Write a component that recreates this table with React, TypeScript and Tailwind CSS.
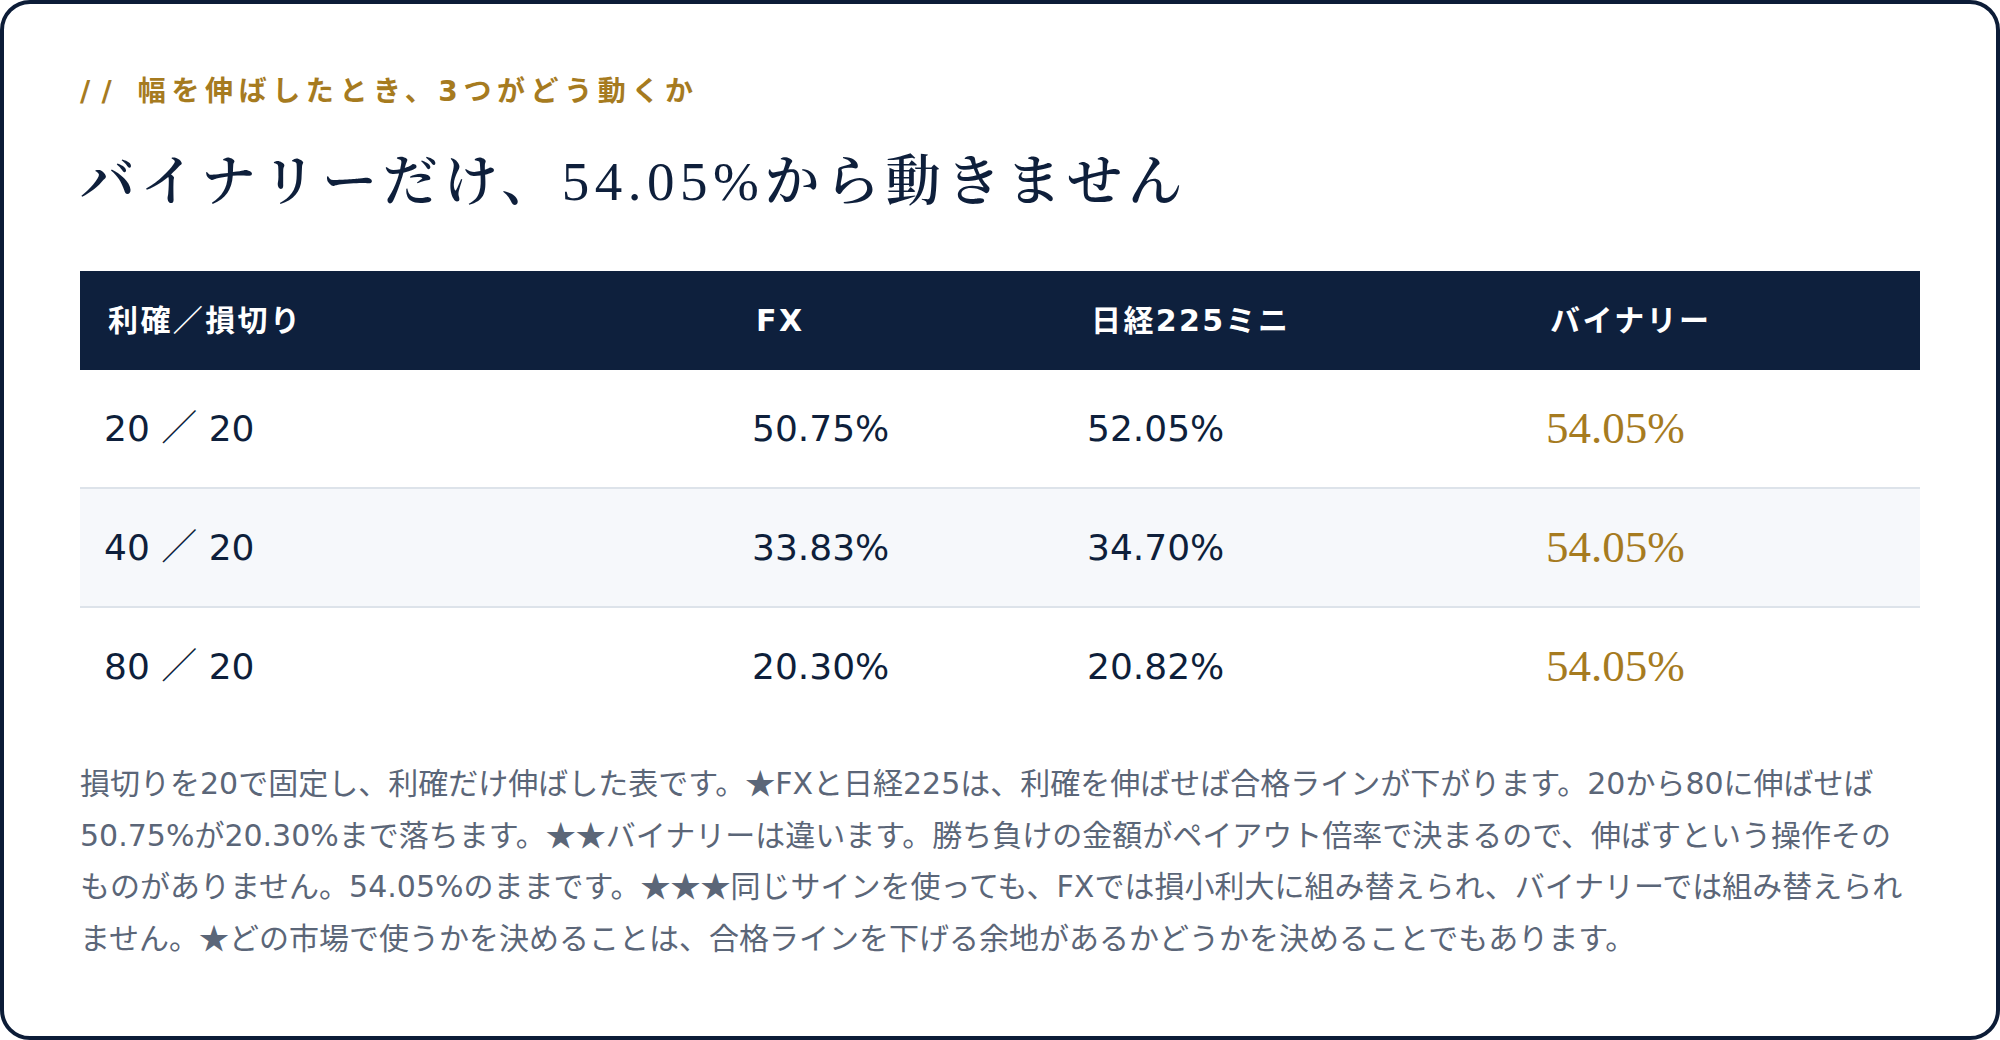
const rows = [
  { ratio: '20 ／ 20', fx: '50.75%', nikkei: '52.05%', binary: '54.05%' },
  { ratio: '40 ／ 20', fx: '33.83%', nikkei: '34.70%', binary: '54.05%' },
  { ratio: '80 ／ 20', fx: '20.30%', nikkei: '20.82%', binary: '54.05%' },
];

const note =
  '損切りを20で固定し、利確だけ伸ばした表です。★FXと日経225は、利確を伸ばせば合格ラインが下がります。20から80に伸ばせば50.75%が20.30%まで落ちます。★★バイナリーは違います。勝ち負けの金額がペイアウト倍率で決まるので、伸ばすという操作そのものがありません。54.05%のままです。★★★同じサインを使っても、FXでは損小利大に組み替えられ、バイナリーでは組み替えられません。★どの市場で使うかを決めることは、合格ラインを下げる余地があるかどうかを決めることでもあります。';

// ★ は全角の字形で出す
function Stars({ text }: { text: string }) {
  return (
    <>
      {text.split(/(★)/).map((part, i) =>
        part === '★' ? (
          <span key={i} className="font-['Noto_Sans_CJK_JP',sans-serif] leading-none">★</span>
        ) : (
          part
        )
      )}
    </>
  );
}

export default function App() {
  return (
    <div className="min-h-[1040px] bg-white font-['DejaVu_Sans','Noto_Sans_CJK_JP',sans-serif]">
      <div className="h-[1040px] rounded-[30px] border-[4px] border-[#0c1c37] px-[76px] pt-[68px]">
        {/* 見出し */}
        <p className="text-[28px] font-bold leading-[40px] tracking-[0.2em] text-[#a67b1f]">
          <span className="mr-[15px] tracking-[0.4em]">//</span>幅を伸ばしたとき、3つがどう動くか
        </p>
        <h2 className="mt-[31px] font-['Liberation_Serif','Noto_Serif_CJK_JP',serif] text-[55px] font-semibold leading-[77px] tracking-[0.1em] text-[#0e1f3b]">
          バイナリーだけ、<span className="font-normal">54.05%</span>から動きません
        </h2>

        {/* 表 */}
        <table className="mt-[51px] w-full table-fixed border-collapse">
          <thead>
            <tr className="bg-[#0e203d] text-white">
              <th className="w-[648px] px-[28px] py-[27px] text-left text-[30px] font-bold leading-[45px] tracking-[0.08em]">利確／損切り</th>
              <th className="w-[335px] px-[28px] py-[27px] text-left text-[30px] font-bold leading-[45px] tracking-[0.08em]">FX</th>
              <th className="w-[459px] px-[28px] py-[27px] text-left text-[30px] font-bold leading-[45px] tracking-[0.08em]">日経225ミニ</th>
              <th className="w-[398px] px-[28px] py-[27px] text-left text-[30px] font-bold leading-[45px] tracking-[0.08em]">バイナリー</th>
            </tr>
          </thead>
          <tbody>
            {rows.map((r, i) => (
              <tr key={r.ratio} className={i === 1 ? 'border-t-2 border-[#dde3ea] bg-[#f6f8fb]' : i === 2 ? 'border-t-2 border-[#dde3ea]' : ''}>
                <td className="px-[24px] py-[32px] text-[36px] leading-[53px] text-[#0e1f3b]">{r.ratio}</td>
                <td className="px-[24px] py-[32px] text-[36px] leading-[53px] text-[#0e1f3b]">{r.fx}</td>
                <td className="px-[24px] py-[32px] text-[36px] leading-[53px] text-[#0e1f3b]">{r.nikkei}</td>
                <td className="px-[24px] py-[32px] font-['Liberation_Serif',serif] text-[45px] leading-[53px] text-[#a67b1f]">{r.binary}</td>
              </tr>
            ))}
          </tbody>
        </table>

        {/* 説明 */}
        <p className="mt-[33px] text-[30px] leading-[51.5px] text-[#5b6678]">
          <Stars text={note} />
        </p>
      </div>
    </div>
  );
}
